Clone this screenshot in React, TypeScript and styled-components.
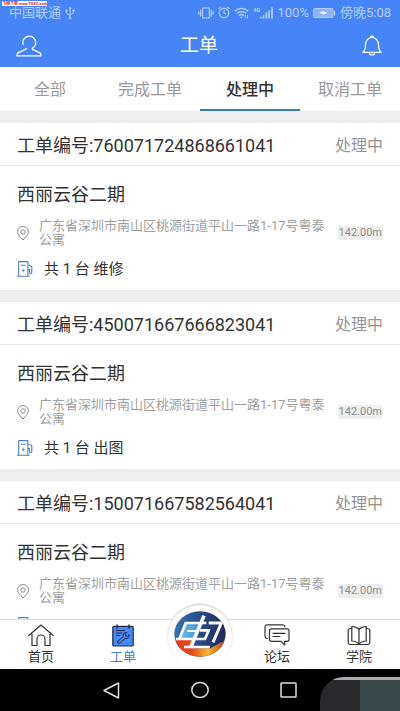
import React from "react";
import styled, { createGlobalStyle } from "styled-components";

const GlobalStyle = createGlobalStyle`
  * { box-sizing: border-box; }
  body {
    margin: 0;
    font-family: Roboto, "Noto Sans CJK SC", sans-serif;
    color: #333;
    background: #fff;
  }
  button { font: inherit; color: inherit; background: none; border: 0; padding: 0; cursor: pointer; }
  a { color: inherit; text-decoration: none; }
  h1, h2, h3, p { margin: 0; font-weight: 400; }
  svg { display: block; flex: none; }
`;

const Screen = styled.div`
  display: flex;
  flex-direction: column;
  height: 100vh;
  overflow: hidden;
  position: relative;
`;

const Top = styled.header`
  flex: none;
  background: #4784f7;
  color: #fff;
`;

const SiteMark = styled.span`
  position: absolute;
  left: 2px;
  top: 1px;
  background: #fff;
  color: #d8262c;
  font-size: 4px;
  line-height: 5px;
  font-weight: 700;
  white-space: nowrap;
`;

const StatusBar = styled.div`
  display: flex;
  align-items: center;
  justify-content: space-between;
  height: 24px;
  padding: 1px 9px 0;
  font-size: 13px;
  line-height: 13px;
  color: #b4cdfc;
`;

const StatusGroup = styled.div<{ $gap: number }>`
  display: flex;
  align-items: center;
  gap: ${(p) => p.$gap}px;
`;

const Signal = styled.span`
  display: flex;
  align-items: flex-start;
`;

const NetLabel = styled.span`
  font-size: 6px;
  line-height: 6px;
  font-weight: 700;
`;

const AppBar = styled.div`
  display: grid;
  grid-template-columns: 1fr auto 1fr;
  align-items: center;
  height: 43px;
  padding: 0 18px 0 16px;
`;

const IconButton = styled.button<{ $end?: boolean }>`
  justify-self: ${(p) => (p.$end ? "end" : "start")};
`;

const AppTitle = styled.h1`
  font-size: 19px;
  line-height: 43px;
`;

const Tabs = styled.nav`
  flex: none;
  display: grid;
  grid-template-columns: repeat(4, 1fr);
  height: 44px;
`;

const Tab = styled.button<{ $active?: boolean }>`
  font-size: 16px;
  border-bottom: 2px solid ${(p) => (p.$active ? "#4078c0" : "transparent")};
  color: ${(p) => (p.$active ? "#333" : "#999")};
  font-weight: ${(p) => (p.$active ? 500 : 400)};
`;

const List = styled.main`
  flex: 1;
  min-height: 0;
  overflow-y: auto;
  scrollbar-width: none;
  display: flex;
  flex-direction: column;
  gap: 12px;
  padding-top: 12px;
  background: #eee;
`;

const Card = styled.article`
  flex: none;
  background: #fff;
`;

const CardHead = styled.div`
  display: flex;
  align-items: center;
  justify-content: space-between;
  height: 43px;
  padding: 0 17px;
  border-bottom: 1px solid #e8e8e8;
`;

const OrderNo = styled.h2`
  font-size: 18px;
`;

const State = styled.span`
  font-size: 16px;
  color: #949494;
`;

const CardBody = styled.div`
  display: flex;
  flex-direction: column;
  gap: 12px;
  padding: 17px 17px 11px;
`;

const Place = styled.h3`
  font-size: 18px;
  line-height: 24px;
`;

const AddressRow = styled.div`
  display: flex;
  align-items: center;
`;

const Address = styled.p`
  flex: 1;
  margin: 0 7px 0 10px;
  font-size: 13px;
  line-height: 14px;
  color: #a0a0a0;
`;

const Distance = styled.span`
  padding: 0 1px;
  background: #eee;
  border-radius: 2px;
  color: #8e8e8e;
  font-size: 11px;
  line-height: 14px;
`;

const Service = styled.p`
  display: flex;
  align-items: center;
  gap: 11px;
  font-size: 15px;
  line-height: 20px;
`;

const BottomNav = styled.nav`
  flex: none;
  display: grid;
  grid-template-columns: 1fr 1fr 72px 1fr 1fr;
  height: 50px;
  background: #fff;
  border-top: 1px solid #dcdcdc;
`;

const NavItem = styled.a<{ $active?: boolean }>`
  display: flex;
  flex-direction: column;
  align-items: center;
  padding-top: 4px;
  font-size: 13px;
  line-height: 18px;
  color: ${(p) => (p.$active ? "#4a80cc" : "#333")};
`;

const CenterSlot = styled.div`
  position: relative;
`;

const CenterButton = styled.button`
  position: absolute;
  left: 50%;
  bottom: 0;
  transform: translateX(-50%);
  width: 64px;
  height: 64px;
  padding-bottom: 6px;
  border-radius: 50%;
  background: #fff;
  box-shadow: 0 -1px 2px #c8c4c4;
  display: flex;
  align-items: center;
  justify-content: center;
`;

const SystemBar = styled.div`
  flex: none;
  position: relative;
  display: flex;
  align-items: center;
  justify-content: center;
  gap: 71px;
  height: 42px;
  background: #000;
  overflow: hidden;
`;

const CornerPanel = styled.div`
  position: absolute;
  right: 0;
  bottom: 0;
  width: 20%;
  height: 34px;
  border-radius: 24px 0 0 0;
  background:
    linear-gradient(#a9adad 3px, transparent 3px),
    linear-gradient(90deg, #29292c 50%, #3b4849 50%);
`;

const UsbIcon = () => (
  <svg width="10" height="14" viewBox="0 0 10 14" fill="none" stroke="currentColor">
    <path d="M5 2v10M1.500 4.500v3L5 9.500M8.500 4.500v2.500L5 9" />
    <path d="M3.500 3 5 .5 6.500 3z" fill="currentColor" stroke="none" />
    <circle cx="5" cy="12" r="1.300" fill="currentColor" stroke="none" />
    <path d="M.5 3.500h2v2h-2zM7.500 3.500h2v2h-2z" fill="currentColor" stroke="none" />
  </svg>
);

const VibrateIcon = () => (
  <svg width="16" height="12" viewBox="0 0 16 12" fill="none" stroke="currentColor" strokeWidth="1.200">
    <rect x="4.600" y="1" width="6.800" height="10" rx=".6" />
    <path d="M2.600 2.500v7M13.400 2.500v7M.8 4.500v3M15.200 4.500v3" />
  </svg>
);

const AlarmIcon = () => (
  <svg width="12" height="13" viewBox="0 0 12 13" fill="none" stroke="currentColor" strokeWidth="1.200">
    <circle cx="6" cy="7" r="4.700" />
    <path d="M6 4.200V7l2 1.200M.6 3l2.200-2M11.400 3 9.200 1" />
  </svg>
);

const WifiIcon = () => (
  <svg width="15" height="12" viewBox="0 0 15 12" fill="none" stroke="currentColor" strokeWidth="1.300">
    <path d="M.8 4.200a9.500 9.500 0 0 1 13.400 0M2.900 6.500a6.500 6.500 0 0 1 9.200 0M4.900 8.700a3.700 3.700 0 0 1 5 0" />
    <circle cx="7.400" cy="10.600" r="1" fill="currentColor" stroke="none" />
    <path d="M11.500 8v3.500M13.500 8v3.500" strokeWidth=".9" />
  </svg>
);

const BarsIcon = () => (
  <svg width="13" height="12" viewBox="0 0 14 12" fill="currentColor">
    <path d="M0 10h1.800v2H0zM3 8h1.800v4H3zM6 5.500h1.800V12H6zM9 3h1.800v9H9zM12 0h1.800v12H12z" />
  </svg>
);

const BatteryIcon = () => (
  <svg width="23" height="10" viewBox="0 0 23 10">
    <rect x=".5" y=".5" width="19.500" height="9" rx="1" fill="#8db4fa" stroke="currentColor" />
    <path d="M21.500 2.500v5" stroke="currentColor" strokeWidth="1.400" />
    <path d="M6 5l5-2v1.300h4L10 7V5.700z" fill="#fff" />
  </svg>
);

const PersonIcon = () => (
  <svg width="26" height="22" viewBox="0 0 26 22" fill="none" stroke="#fff" strokeWidth="1.300" strokeLinejoin="round" strokeLinecap="round">
    <path d="M7.200 9.500A6.400 6.400 0 1 1 16.300 13.200l.2 1.200 7.400 3.400q1.300 1 .9 3H1.100q-.4-2 .9-3l7.300-3.400 1.200-.9" />
  </svg>
);

const BellIcon = () => (
  <svg width="20" height="21" viewBox="0 0 20 21" fill="none" stroke="#fff" strokeWidth="1.200" strokeLinejoin="round" strokeLinecap="round">
    <path d="M.8 17.300c2.400-1.800 2.700-3.300 2.700-7.300 0-4.500 2.900-7.500 6.500-7.500s6.500 3 6.500 7.500c0 4 .3 5.500 2.700 7.300zM8.500 2.400a1.500 1.500 0 1 1 3 0M7.500 18a2.500 2 0 0 0 5 0" />
  </svg>
);

const PinIcon = () => (
  <svg width="12" height="15" viewBox="0 0 12 15" fill="none" stroke="#8e8e8e">
    <path d="M6 14C3 11 .6 8.700.6 5.900a5.400 5.400 0 0 1 10.800 0C11.400 8.700 9 11 6 14z" />
    <circle cx="6" cy="6" r="2.200" />
  </svg>
);

const PumpIcon = () => (
  <svg width="16" height="16" viewBox="0 0 16 16" fill="none" stroke="#4a7fc6" strokeWidth="1.100">
    <path d="M1.700 15V1.200q0-.6.6-.6h8q.6 0 .6.6V15M0 15.300h12.600M4 4.200h4.500M12 4l2.800 1.800v5.400q-.2 1.700-1.500 1.300-.8-.4-.8-1.700V8.500H11" />
    <path d="m6.600 7-1.700 3h1.400l-.5 2.200 2-3.200H6.300z" fill="#4a7fc6" stroke="none" />
  </svg>
);

const HomeIcon = () => (
  <svg width="26" height="24" viewBox="0 0 26 24" fill="none" stroke="#333" strokeWidth="1.200" strokeLinejoin="round" strokeLinecap="round">
    <path d="M.8 11.500 13 1l12.200 10.500M4 10v11.500h5V15a4 4 0 0 1 8 0v6.500h5V10" />
  </svg>
);

const OrderIcon = () => (
  <svg width="24" height="24" viewBox="0 0 24 24" fill="none" stroke="#1d2c4d" strokeLinecap="round" strokeLinejoin="round">
    <rect x="1.800" y="2.300" width="20.400" height="19.700" rx="1" fill="#4688f5" strokeWidth="1.200" />
    <path d="M6 1v3M18 1v3" strokeWidth="1.400" />
    <path d="M5.500 6.500h8M5.500 9h5.500M5.500 11.500h3" />
    <path d="m6.800 17.300 5.400-4.700c-.7-2.300.8-4.300 3.500-4.100l-1.500 1.900.5 1.500 1.600.4 1.900-1.700c.6 2.500-1.400 4.500-4.100 3.900l-5.200 4.600q-1.200.7-1.900-.1t-.2-1.700z" />
  </svg>
);

const ForumIcon = () => (
  <svg width="26" height="24" viewBox="0 0 26 24" fill="none" stroke="#333" strokeWidth="1.200" strokeLinecap="round" strokeLinejoin="round">
    <path d="M3.500 14.500H3q-2-.2-2-2.200V3Q1 .8 3.200.8h15.600q2 0 2.200 2" />
    <path d="M7.500 4.800H23q2 0 2 2v8.500q0 2-2 2h-2.300V21L17 17.300H7.500q-2 0-2-2V6.800q0-2 2-2zM9 9.300h12M9 12.500h7" />
  </svg>
);

const BookIcon = () => (
  <svg width="24" height="24" viewBox="0 0 24 24" fill="none" stroke="#333" strokeWidth="1.200" strokeLinejoin="round">
    <path d="M12 5.500V20.500M12 5.500C10 3.200 7.500 2.500 4.800 2.500v14.500c3 0 5.200.8 7.200 3.400 2-2.600 4.200-3.400 7.200-3.400V2.500c-2.700 0-5.200.7-7.200 3M4.800 4.500Q1.500 4.300 1.200 6v13q.3 1.500 2 1.500h17.600q1.700 0 2-1.500V6q-.3-1.700-3.600-1.500" />
  </svg>
);

const Logo = () => (
  <svg width="52" height="46" viewBox="0 0 156 138">
    <defs>
      <linearGradient id="sky" x1="0" y1="0" x2="1" y2="0">
        <stop offset="0" stopColor="#3472b4" />
        <stop offset=".45" stopColor="#2a4f8c" />
        <stop offset="1" stopColor="#1f2858" />
      </linearGradient>
      <linearGradient id="ice" x1="0" y1="0" x2="1" y2="0">
        <stop offset="0" stopColor="#6fc4ee" />
        <stop offset="1" stopColor="#3f8bcb" />
      </linearGradient>
      <linearGradient id="fire" x1="0" y1="0" x2="1" y2="0">
        <stop offset="0" stopColor="#e2381c" />
        <stop offset=".35" stopColor="#ea4a1c" />
        <stop offset=".65" stopColor="#fbb52a" />
        <stop offset="1" stopColor="#b93a20" />
      </linearGradient>
      <clipPath id="disc">
        <ellipse cx="78" cy="69" rx="77" ry="68" />
      </clipPath>
    </defs>
    <g clipPath="url(#disc)">
      <path d="M0 0h156v138H0z" fill="url(#sky)" />
      <path d="M34 36h50L62 90H12z" fill="url(#ice)" />
      <path d="M0 86h64l-14 26h60l32-18 14-6v50H0z" fill="url(#fire)" />
      <g fill="none" stroke="#fff">
        <path d="M6 84H58M16 84 35 36h62" strokeWidth="8" />
        <path d="M40 60H68L60 84" strokeWidth="6" />
        <path d="M90 14 50 110" strokeWidth="11" />
        <path d="M30 108h78" strokeWidth="8" />
        <path d="M78 58h26L93 84H64" strokeWidth="8" />
        <path d="M104 36h38l-25 58" strokeWidth="9" />
      </g>
    </g>
  </svg>
);

const BackIcon = () => (
  <svg width="17" height="17" viewBox="0 0 17 17" fill="none" stroke="#ddd" strokeWidth="1.500" strokeLinejoin="round">
    <path d="M1 8.500 15.500 1v15z" />
  </svg>
);
const CircleIcon = () => (
  <svg width="18" height="18" viewBox="0 0 18 18" fill="none" stroke="#ddd" strokeWidth="1.500">
    <ellipse cx="9" cy="9" rx="8.200" ry="7.600" />
  </svg>
);
const SquareIcon = () => (
  <svg width="17" height="16" viewBox="0 0 17 16" fill="none" stroke="#ddd" strokeWidth="1.500">
    <rect x="1" y="1" width="15" height="14" rx=".5" />
  </svg>
);

const tabs = ["全部", "完成工单", "处理中", "取消工单"];

const orders = [
  { no: "760071724868661041", kind: "维修" },
  { no: "450071667666823041", kind: "出图" },
  { no: "150071667582564041", kind: "" },
];

export default function App() {
  return (
    <Screen>
      <GlobalStyle />
      <Top>
        <StatusBar>
          <StatusGroup $gap={4}>
            <span>中国联通</span>
            <UsbIcon />
          </StatusGroup>
          <StatusGroup $gap={4}>
            <VibrateIcon />
            <AlarmIcon />
            <WifiIcon />
            <Signal>
              <NetLabel>4G</NetLabel>
              <BarsIcon />
            </Signal>
            <span>100%</span>
            <BatteryIcon />
            <span>傍晚5:08</span>
          </StatusGroup>
        </StatusBar>
        <AppBar>
          <IconButton aria-label="个人中心"><PersonIcon /></IconButton>
          <AppTitle>工单</AppTitle>
          <IconButton $end aria-label="消息"><BellIcon /></IconButton>
        </AppBar>
      </Top>
      <Tabs>
        {tabs.map((t) => (
          <Tab key={t} $active={t === "处理中"}>{t}</Tab>
        ))}
      </Tabs>
      <List>
        {orders.map((o) => (
          <Card key={o.no}>
            <CardHead>
              <OrderNo>工单编号:{o.no}</OrderNo>
              <State>处理中</State>
            </CardHead>
            <CardBody>
              <Place>西丽云谷二期</Place>
              <AddressRow>
                <PinIcon />
                <Address>广东省深圳市南山区桃源街道平山一路1-17号粤泰公寓</Address>
                <Distance>142.00m</Distance>
              </AddressRow>
              <Service>
                <PumpIcon />
                {o.kind && `共 1 台 ${o.kind}`}
              </Service>
            </CardBody>
          </Card>
        ))}
      </List>
      <BottomNav>
        <NavItem href="#home"><HomeIcon />首页</NavItem>
        <NavItem href="#orders" $active><OrderIcon />工单</NavItem>
        <CenterSlot>
          <CenterButton aria-label="电"><Logo /></CenterButton>
        </CenterSlot>
        <NavItem href="#forum"><ForumIcon />论坛</NavItem>
        <NavItem href="#academy"><BookIcon />学院</NavItem>
      </BottomNav>
      <SystemBar>
        <button aria-label="返回"><BackIcon /></button>
        <button aria-label="主屏幕"><CircleIcon /></button>
        <button aria-label="最近任务"><SquareIcon /></button>
        <CornerPanel />
      </SystemBar>
      <SiteMark>飞翔下载 www.F0XZ.com</SiteMark>
    </Screen>
  );
}
